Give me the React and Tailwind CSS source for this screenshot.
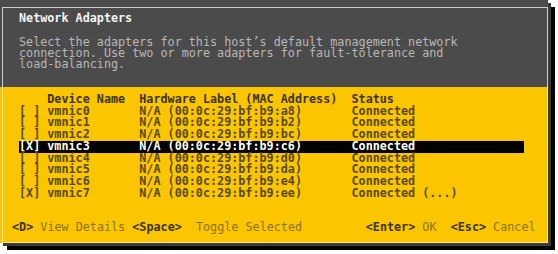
const adapters = [
  ["vmnic0", "a8", false],
  ["vmnic1", "b2", false],
  ["vmnic2", "bc", false],
  ["vmnic3", "c6", true],
  ["vmnic4", "d0", false],
  ["vmnic5", "da", false],
  ["vmnic6", "e4", false],
  ["vmnic7", "ee", true],
];

function rowText(name, mac, checked, last) {
  const box = checked ? "[X] " : "[ ] ";
  const hw = `N/A (00:0c:29:bf:b9:${mac})`;
  return box + name.padEnd(13) + hw.padEnd(30) + (last ? "Connected (...)" : "Connected");
}

function Key({ children }) {
  return <span className="font-bold text-[#3d3200]">{children}</span>;
}

function Label({ children }) {
  return <span className="text-[#8b7200]">{children}</span>;
}

export default function App() {
  return (
    <div className="w-[558px] h-[254px] bg-white font-['DejaVu_Sans_Mono',monospace] text-[11.75px]">
      <div className="w-[548px] h-[243px] flex flex-col shadow-[3px_3px_0_#3b3b3b,7px_7px_0_#050505]">
        {/* title / description */}
        <div className="h-[87px] bg-[#4b4b4b] pl-[2px] pt-[7px]">
          <div className="h-full border-t border-x border-[#cdcdcd] pl-[16px] pt-[5px]">
            <div className="leading-[11.7px] font-bold text-[#f4f4f4] whitespace-pre">Network Adapters</div>
            <div className="mt-[12px] leading-[11px] text-[#b8b8b8] whitespace-pre">
              <div>Select the adapters for this host’s default management network</div>
              <div>connection. Use two or more adapters for fault-tolerance and</div>
              <div>load-balancing.</div>
            </div>
          </div>
        </div>

        {/* adapter list */}
        <div className="h-[156px] bg-[#fbc600] pl-[2px]">
          <div className="h-full border-x border-b border-[#ffe98f] pl-[9px] pt-[7px]">
            <div className="pl-[7px] leading-[11.7px] whitespace-pre">
              <div className="font-bold text-[#3d3200]">
                {"    Device Name  Hardware Label (MAC Address)  Status"}
              </div>
              {adapters.map(([name, mac, checked], i) => {
                const selected = name === "vmnic3";
                return (
                  <div
                    key={name}
                    className={
                      selected
                        ? "w-[505px] bg-black text-white font-bold"
                        : "text-[#584800] font-bold"
                    }
                  >
                    {rowText(name, mac, checked, i === adapters.length - 1)}
                  </div>
                );
              })}
            </div>

            <div className="mt-[23px] leading-[11.7px] whitespace-pre">
              <Key>{"<D>"}</Key>
              <Label>{" View Details "}</Label>
              <Key>{"<Space>"}</Key>
              <Label>{"  Toggle Selected".padEnd(26)}</Label>
              <Key>{"<Enter>"}</Key>
              <Label>{" OK  "}</Label>
              <Key>{"<Esc>"}</Key>
              <Label>{" Cancel"}</Label>
            </div>
          </div>
        </div>
      </div>
    </div>
  );
}
